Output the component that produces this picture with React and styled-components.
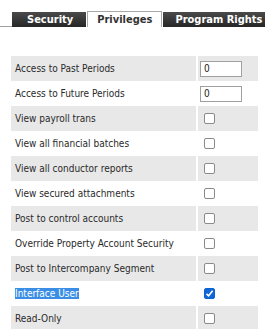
import React from "react"
import styled, { createGlobalStyle } from "styled-components"

const GlobalStyle = createGlobalStyle`
  body {
    margin: 0;
    background: #fff;
    font-family: "DejaVu Sans", Verdana, sans-serif;
    overflow: hidden;
  }
`

const Page = styled.div`
  width: 265px;
  height: 329px;
  overflow: hidden;
`

const TabBar = styled.div`
  display: flex;
  align-items: flex-end;
  gap: 1px;
  padding: 11px 0 0 5px;
  white-space: nowrap;
  border-bottom: 1px solid #a0a0a0;
  width: 7px;
  overflow: visible;
`

const Tab = styled.div`
  flex: none;
  height: 15px;
  line-height: 15px;
  margin-bottom: -1px;
  padding: ${(p) => p.$pad};
  font-family: "DejaVu Sans Condensed", "DejaVu Sans", sans-serif;
  font-stretch: condensed;
  font-weight: bold;
  font-size: 11px;
  color: ${(p) => (p.$active ? "#333" : "#fff")};
  background: ${(p) =>
    p.$active ? "#fff" : "linear-gradient(#4a4a4a, #262626)"};
  border: ${(p) => (p.$active ? "1px solid #a8a8a8" : "none")};
  border-bottom: none;
  box-sizing: content-box;
  &:first-child {
    margin-left: 7px;
  }
`

const Grid = styled.div`
  margin: 29px 0 0 11px;
  width: 247px;
`

const Row = styled.div`
  display: grid;
  grid-template-columns: 185px 60px;
  column-gap: 2px;
  height: 25px;
`

const Cell = styled.div`
  display: flex;
  align-items: center;
  background: ${(p) => (p.$shaded ? "#e8e8e8" : "#fff")};
  padding-left: ${(p) => p.$indent}px;
  font-family: "DejaVu Sans Condensed", "DejaVu Sans", sans-serif;
  font-stretch: condensed;
  font-size: 10px;
  color: #2a2a2a;
`

const Selected = styled.span`
  background: #3a8ee6;
  color: #fff;
  line-height: 11px;
`

const NumberBox = styled.div`
  width: 40px;
  height: 14px;
  border: 1px solid #a0a0a0;
  background: #fff;
  padding-left: 3px;
  box-sizing: border-box;
  width: 42px;
  height: 16px;
  line-height: 14px;
  font-size: 10px;
  font-family: "DejaVu Sans Condensed", "DejaVu Sans", sans-serif;
  color: #222;
  margin-left: -4px;
`

const Check = styled.div`
  width: 11px;
  height: 11px;
  box-sizing: border-box;
  border-radius: 2px;
  border: 1px solid ${(p) => (p.$on ? "#0d63d0" : "#8a8a8a")};
  background: ${(p) => (p.$on ? "#1068d8" : "#fff")};
  display: flex;
  align-items: center;
  justify-content: center;
`

const rows = [
  { label: "Access to Past Periods", value: "0" },
  { label: "Access to Future Periods", value: "0" },
  { label: "View payroll trans" },
  { label: "View all financial batches" },
  { label: "View all conductor reports" },
  { label: "View secured attachments" },
  { label: "Post to control accounts" },
  { label: "Override Property Account Security" },
  { label: "Post to Intercompany Segment" },
  { label: "Interface User", checked: true, selected: true },
  { label: "Read-Only" },
]

const App = () => {
  return (
    <Page>
      <GlobalStyle />
      <TabBar>
        <Tab $pad="0 13px 0 15px">Security</Tab>
        <Tab $active $pad="0 9px 0 9px">Privileges</Tab>
        <Tab $pad="0 12px 0 12px">Program Rights</Tab>
      </TabBar>
      <Grid>
        {rows.map((r, i) => (
          <Row key={r.label}>
            <Cell $shaded={i % 2 === 0} $indent={4}>
              {r.selected ? <Selected>{r.label}</Selected> : r.label}
            </Cell>
            <Cell $shaded={i % 2 === 0} $indent={r.value ? 6 : 6}>
              {r.value !== undefined ? (
                <NumberBox>{r.value}</NumberBox>
              ) : (
                <Check $on={r.checked}>
                  {r.checked && (
                    <svg width="9" height="9" viewBox="0 0 9 9">
                      <path
                        d="M1.5 4.8 L3.6 6.8 L7.6 1.8"
                        fill="none"
                        stroke="#fff"
                        strokeWidth="1.6"
                      />
                    </svg>
                  )}
                </Check>
              )}
            </Cell>
          </Row>
        ))}
      </Grid>
    </Page>
  )
}

export default App
